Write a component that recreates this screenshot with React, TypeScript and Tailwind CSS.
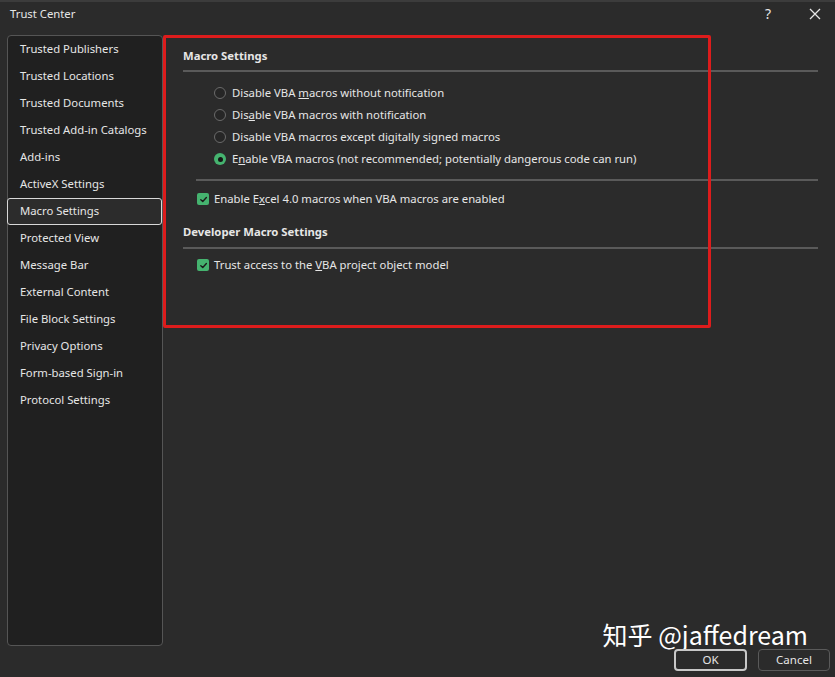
import { ReactNode } from "react"

const navItems = [
    "Trusted Publishers",
    "Trusted Locations",
    "Trusted Documents",
    "Trusted Add-in Catalogs",
    "Add-ins",
    "ActiveX Settings",
    "Macro Settings",
    "Protected View",
    "Message Bar",
    "External Content",
    "File Block Settings",
    "Privacy Options",
    "Form-based Sign-in",
    "Protocol Settings",
]

function Radio({ checked, children }: { checked?: boolean; children: ReactNode }) {
    return (
        <div className="flex items-center h-[22px] pl-[214px]">
            {checked ? (
                <span className="w-[12px] h-[12px] rounded-full bg-[#45b36f] flex items-center justify-center">
                    <span className="w-[5px] h-[5px] rounded-full bg-[#161616]" />
                </span>
            ) : (
                <span className="w-[12px] h-[12px] rounded-full border border-[#6b6b6b] bg-[#262626]" />
            )}
            <span className="ml-[6px]">{children}</span>
        </div>
    )
}

function Check({ children }: { children: ReactNode }) {
    return (
        <div className="flex items-center h-[20px] pl-[197px]">
            <span className="w-[12px] h-[12px] rounded-[2px] bg-[#45b36f] flex items-center justify-center">
                <svg width="9" height="9" viewBox="0 0 10 10" fill="none">
                    <path d="M2 5.2 L4.2 7.3 L8.2 2.8" stroke="#1a1a1a" strokeWidth="1.5" strokeLinecap="round" strokeLinejoin="round" />
                </svg>
            </span>
            <span className="ml-[5px]">{children}</span>
        </div>
    )
}

export default function App() {
    return (
        <div className="relative w-[835px] h-[677px] bg-[#2b2b2b] text-[#e6e6e6] text-[11.3px] font-['Noto_Sans','Open_Sans',sans-serif] overflow-hidden border-t-2 border-[#3c3c3c]">
            {/* title bar */}
            <div className="flex items-center h-[23px] pl-[10px] pr-[14px]">
                <span className="flex-1 leading-none">Trust Center</span>
                <span className="text-[14px] leading-none mr-[38px]">?</span>
                <svg width="12" height="12" viewBox="0 0 12 12" className="mt-[1px]">
                    <path d="M1 1 L11 11 M11 1 L1 11" stroke="#e6e6e6" strokeWidth="1.3" />
                </svg>
            </div>

            <div className="flex pt-[10px] pl-[7px]">
                {/* sidebar */}
                <div className="w-[156px] h-[611px] shrink-0 bg-[#202020] border border-[#555] rounded-[4px]">
                    {navItems.map((item) => (
                        <div
                            key={item}
                            className={
                                item === "Macro Settings"
                                    ? "h-[27px] flex items-center pl-[12px] -ml-px border-[1.5px] border-[#d8d8d8] rounded-[3px] bg-[#2c2c2c]"
                                    : "h-[27px] flex items-center pl-[12px]"
                            }
                        >
                            {item}
                        </div>
                    ))}
                </div>

                {/* content */}
                <div className="flex-1 -ml-[163px] pr-[17px]">
                    <div className="pl-[183px] mt-[10px] font-bold h-[22px] leading-[22px]">Macro Settings</div>
                    <div className="ml-[183px] mt-[3px] h-[2px] bg-[#5a5a5a]" />
                    <div className="mt-[10px]">
                        <Radio>
                            Disable VBA <u>m</u>acros without notification
                        </Radio>
                        <Radio>
                            Dis<u>a</u>ble VBA macros with notification
                        </Radio>
                        <Radio>Disable VBA macros except digitally signed macros</Radio>
                        <Radio checked>
                            E<u>n</u>able VBA macros (not recommended; potentially dangerous code can run)
                        </Radio>
                    </div>
                    <div className="ml-[196px] mt-[9px] h-[2px] bg-[#5a5a5a]" />
                    <div className="mt-[8px]">
                        <Check>
                            Enable E<u>x</u>cel 4.0 macros when VBA macros are enabled
                        </Check>
                    </div>
                    <div className="pl-[183px] mt-[12px] font-bold h-[22px] leading-[22px]">Developer Macro Settings</div>
                    <div className="ml-[183px] mt-[4px] h-[2px] bg-[#5a5a5a]" />
                    <div className="mt-[6px]">
                        <Check>
                            Trust access to the <u>V</u>BA project object model
                        </Check>
                    </div>
                </div>
            </div>

            {/* footer */}
            <div className="flex justify-end items-end pr-[5px] -mt-[26px]">
                <div className="flex flex-col items-end">
                    <span className="text-[25px] leading-[28px] text-white mr-[22px] font-['Noto_Sans_CJK_SC','Noto_Sans',sans-serif]">
                        知乎 @jaffedream
                    </span>
                    <div className="flex gap-[11px] mt-[1px] text-[11.5px]">
                        <button className="w-[73px] h-[22px] border-2 border-[#c8c8c8] rounded-[4px] bg-[#2b2b2b] leading-none">OK</button>
                        <button className="w-[72px] h-[22px] border border-[#5a5a5a] rounded-[4px] bg-[#2b2b2b] leading-none">Cancel</button>
                    </div>
                </div>
            </div>

            {/* red annotation */}
            <div className="absolute left-[163px] top-[33px] w-[548px] h-[293px] border-[3px] border-[#dd1c1c] rounded-[2px] pointer-events-none" />
        </div>
    )
}
